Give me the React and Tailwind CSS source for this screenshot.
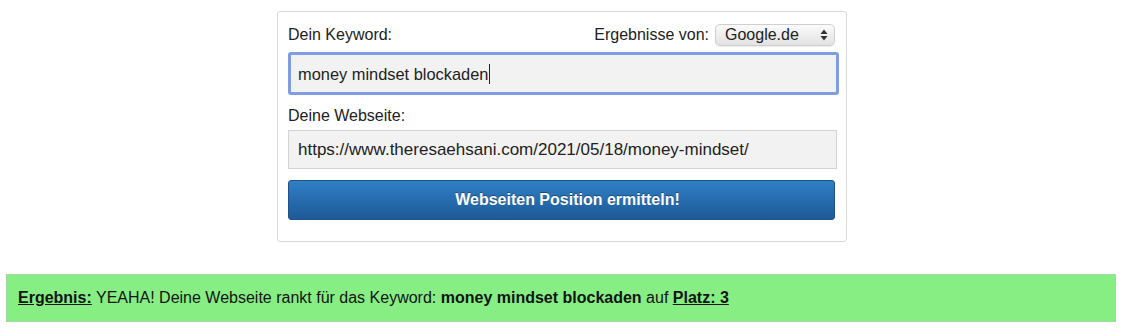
import React from 'react';

const SelectArrows = () => (
  <svg width="8" height="12" viewBox="0 0 8 12" className="text-[#333]">
    <path d="M4 0.5 L7.5 5 H0.5 Z" fill="currentColor" />
    <path d="M4 11.5 L7.5 7 H0.5 Z" fill="currentColor" />
  </svg>
);

const App = () => {
  return (
    <div className="w-[1124px] h-[332px] bg-white overflow-hidden font-['Liberation_Sans',Arial,sans-serif] text-[16px] text-[#222]">
      <div className="mx-auto mt-[11px] w-[570px] h-[231px] border border-[#d9d9d9] rounded-[3px] pl-[10px] pt-[12px]">
        <div className="flex items-center justify-between w-[547px] h-[22px]">
          <span className="leading-[20px]">Dein Keyword:</span>
          <div className="flex items-center gap-[6px]">
            <span className="leading-[20px]">Ergebnisse von:</span>
            <div className="flex items-center justify-between w-[120px] h-[22px] pl-[9px] pr-[6px] rounded-[5px] border border-[#cfcfcf] bg-gradient-to-b from-[#fbfbfb] to-[#e2e2e2] shadow-[0_1px_1px_rgba(0,0,0,0.08)]">
              <span className="leading-[20px]">Google.de</span>
              <SelectArrows />
            </div>
          </div>
        </div>

        <div className="mt-[6px] w-[551px] h-[43px] rounded-[3px] border-[3px] border-[#7f9de0] bg-[#f2f2f2] flex items-center pl-[7px]">
          <span className="leading-[20px] text-[16.4px]">money mindset blockaden</span>
          <span className="ml-[1px] w-[1px] h-[20px] bg-[#222]"></span>
        </div>

        <div className="mt-[11px] leading-[20px]">Deine Webseite:</div>

        <div className="mt-[4px] w-[549px] h-[39px] border border-[#d3d3d3] bg-[#f2f2f2] flex items-center pl-[9px]">
          <span className="leading-[20px] text-[17px]">https://www.theresaehsani.com/2021/05/18/money-mindset/</span>
        </div>

        <button className="mt-[11px] w-[547px] h-[40px] rounded-[3px] border border-[#1d5189] bg-gradient-to-b from-[#2f7fc6] to-[#1e5a96] text-white font-bold text-[16px] leading-[20px] pl-[12px] [text-shadow:0_-1px_0_rgba(0,0,0,0.35)] flex items-center justify-center">
          Webseiten Position ermitteln!
        </button>
      </div>

      <div className="mt-[32px] ml-[6px] mr-[8px] h-[48px] border border-[#a3d9a0] bg-[#86ee83] flex items-center pl-[11px] text-[#141414]">
        <span className="leading-[20px]">
          <b className="underline">Ergebnis:</b> YEAHA! Deine Webseite rankt für das Keyword: <b>money mindset blockaden</b> auf <b className="underline">Platz: 3</b>
        </span>
      </div>
    </div>
  );
};

export default App;
